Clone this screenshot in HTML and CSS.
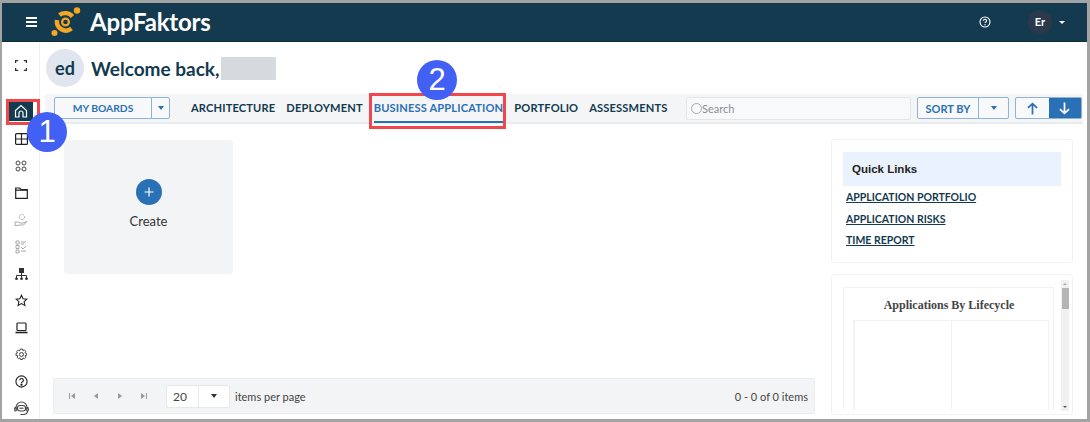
FILE: index.html
```html
<!DOCTYPE html>
<html lang="en">
<head>
<meta charset="utf-8">
<title>AppFaktors</title>
<link rel="stylesheet" href="styles.css">
</head>
<body>
<div class="frame">
  <header class="topbar">
    <div class="burger"><span></span><span></span><span></span></div>
    <svg class="logo" width="30" height="30" viewBox="0 0 30 30">
      <circle cx="14.500" cy="15" r="3.400" fill="none" stroke="#f5a623" stroke-width="2.200"/>
      <path d="M21.500 9.500a9.500 9.500 0 0 0-13-1.500" fill="none" stroke="#f5a623" stroke-width="4.400"/>
      <path d="M6 13a9 9 0 0 0 14.500 8.500" fill="none" stroke="#f5a623" stroke-width="4.400"/>
      <circle cx="26" cy="3.500" r="3.200" fill="#f5a623"/>
      <circle cx="3.500" cy="26" r="3" fill="#f5a623"/>
    </svg>
    <div class="brand">AppFaktors</div>
    <svg class="help" width="12" height="12" viewBox="0 0 12 12">
      <circle cx="6" cy="6" r="5" fill="none" stroke="#fff" stroke-width="1.100"/>
      <path d="M4.400 4.700a1.600 1.500 0 1 1 2.400 1.300c-.6.400-.8.600-.8 1.100" fill="none" stroke="#fff" stroke-width="1.100"/>
      <circle cx="6" cy="8.700" r=".7" fill="#fff"/>
    </svg>
    <div class="user">Er</div>
    <div class="user-caret"></div>
  </header>
  <div class="main">
    <nav class="sidebar">
      <div class="side-item first"><svg width="12" height="11" viewBox="0 0 12 11" fill="none" stroke="#333" stroke-width="1.200"><path d="M.6 3V.6h2.600M8.800.6h2.600V3M11.400 8v2.400H8.800M3.200 10.400H.6V8"/></svg></div>
      <div class="side-item home"><svg width="14" height="14" viewBox="0 0 14 14" fill="none" stroke="#fff" stroke-width="1.200"><path d="M1.500 6.500 7 1.500l5.500 5V13H9V9a2 2 0 0 0-4 0v4H1.500z"/></svg></div>
      <div class="side-item"><svg width="13" height="12" viewBox="0 0 13 12" fill="none" stroke="#222" stroke-width="1.200"><rect x=".6" y=".6" width="11.800" height="10.800" rx="1"/><path d="M.6 6h11.800M6.500.6v10.800"/></svg></div>
      <div class="side-item"><svg width="12" height="12" viewBox="0 0 12 12" fill="none" stroke="#444" stroke-width="1"><circle cx="3" cy="3" r="2"/><circle cx="9" cy="3" r="2"/><circle cx="3" cy="9" r="2"/><circle cx="9" cy="9" r="2"/></svg></div>
      <div class="side-item"><svg width="13" height="12" viewBox="0 0 13 12" fill="none" stroke="#222" stroke-width="1.200"><path d="M.7 1h4l1.300 1.500h6.300v8.800H.7z"/><path d="M.7 3.200h11.600"/></svg></div>
      <div class="side-item"><svg width="14" height="14" viewBox="0 0 14 14" fill="none" stroke="#aaa" stroke-width="1"><circle cx="8" cy="4" r="2.600" stroke-dasharray="1.500 .6"/><path d="M1 9h3l2 1h3l4-1.500-3.500 3.500H5l-1 .5H1z"/></svg></div>
      <div class="side-item"><svg width="13" height="14" viewBox="0 0 13 14" fill="none" stroke="#aaa" stroke-width="1"><path d="M1 1h3v3H1zM1 5.500h3v3H1zM1 10h3v3H1zM6 2h5M6 4h3M6 7l2 2 3-3M6 11h5"/></svg></div>
      <div class="side-item"><svg width="13" height="12" viewBox="0 0 13 12" fill="none" stroke="#333" stroke-width="1"><rect x="4.500" y="0" width="4" height="4.500" fill="#333"/><path d="M6.500 4.500v3M1.500 10V7.500h10V10M6.500 7.500V10"/><circle cx="1.500" cy="10.700" r="1" fill="#333"/><circle cx="6.500" cy="10.700" r="1" fill="#333"/><circle cx="11.500" cy="10.700" r="1" fill="#333"/></svg></div>
      <div class="side-item"><svg width="13" height="13" viewBox="0 0 13 13" fill="none" stroke="#222" stroke-width="1.100"><path d="m6.500 1.200 1.600 3.500 3.800.4-2.800 2.600.8 3.800-3.400-1.900-3.400 1.900.8-3.800L1.100 5.100l3.800-.4z"/></svg></div>
      <div class="side-item"><svg width="13" height="12" viewBox="0 0 13 12" fill="none" stroke="#222" stroke-width="1.200"><rect x="2" y="1" width="9" height="7.500" rx=".8"/><path d="M.5 10.500h12" stroke-width="1.600"/></svg></div>
      <div class="side-item"><svg width="13" height="13" viewBox="0 0 13 13" fill="none" stroke="#444" stroke-width="1"><circle cx="6.500" cy="6.500" r="2"/><path d="M5.500 1h2l.4 1.600 1.500-.7 1.400 1.400-.8 1.500 1.500.5v2l-1.500.5.8 1.500-1.400 1.400-1.500-.8-.4 1.600h-2l-.5-1.600-1.500.8-1.400-1.400.8-1.500L1 7.500v-2l1.500-.5-.8-1.500 1.400-1.400 1.500.7z"/></svg></div>
      <div class="side-item"><svg width="13" height="13" viewBox="0 0 13 13" fill="none" stroke="#222" stroke-width="1.100"><circle cx="6.500" cy="6.500" r="5.600"/><path d="M4.800 5.200a1.800 1.700 0 1 1 2.700 1.500c-.7.400-1 .7-1 1.200"/><circle cx="6.500" cy="9.700" r=".6" fill="#222"/></svg></div>
      <div class="side-item"><svg width="15" height="15" viewBox="0 0 15 15" fill="none" stroke="#444" stroke-width="1.100"><path d="M2 8V6.500a5.500 5.500 0 0 1 11 0V8"/><rect x="3.500" y="4.500" width="8" height="5.500" rx="2.500"/><path d="M5.500 7.200h4"/><rect x=".7" y="6.500" width="1.600" height="3.500" rx=".8"/><rect x="12.700" y="6.500" width="1.600" height="3.500" rx=".8"/><path d="M13.500 10c0 2.500-2 3.500-4.500 3.500H6.500"/></svg></div>
    </nav>
    <div class="content">
      <div class="welcome">
        <div class="avatar">ed</div>
        <h1 class="greeting">Welcome back,</h1>
        <div class="redacted"></div>
      </div>
      <div class="toolbar">
        <div class="split boards">
          <div class="split-label">MY BOARDS</div>
          <div class="split-caret"><i class="caret"></i></div>
        </div>
        <div class="tabs">
          <a class="tab">ARCHITECTURE</a>
          <a class="tab">DEPLOYMENT</a>
          <a class="tab active">BUSINESS APPLICATION</a>
          <a class="tab">PORTFOLIO</a>
          <a class="tab">ASSESSMENTS</a>
        </div>
        <div class="search">
          <span class="search-ring"></span><span class="search-text">Search</span>
        </div>
        <div class="split sort">
          <div class="split-label">SORT BY</div>
          <div class="split-caret"><i class="caret"></i></div>
        </div>
        <div class="order">
          <div class="order-btn"><svg width="13" height="13" viewBox="0 0 12 12" fill="none" stroke="#2a70b5" stroke-width="1.600"><path d="M6 11.500V1.500M1.800 5.500 6 1.500l4.200 4"/></svg></div>
          <div class="order-btn on"><svg width="13" height="13" viewBox="0 0 12 12" fill="none" stroke="#fff" stroke-width="1.600"><path d="M6 .5v10M1.800 6.500 6 10.500l4.200-4"/></svg></div>
        </div>
      </div>
      <div class="body">
        <div class="left">
          <div class="boards-area">
            <div class="create-card">
              <div class="plus"><svg width="10" height="10" viewBox="0 0 10 10" stroke="#fff" stroke-width="1.200"><path d="M5 .5v9M.5 5h9"/></svg></div>
              <div class="create-label">Create</div>
            </div>
          </div>
          <div class="pager">
            <div class="pager-nav">
              <svg width="8" height="8" viewBox="0 0 8 8" fill="#999"><path d="M1 1h1v6H1zM7 1v6L3 4z"/></svg>
              <svg width="8" height="8" viewBox="0 0 8 8" fill="#999"><path d="M6 1v6L2 4z"/></svg>
              <svg width="8" height="8" viewBox="0 0 8 8" fill="#999"><path d="M2 1v6l4-3z"/></svg>
              <svg width="8" height="8" viewBox="0 0 8 8" fill="#999"><path d="M6 1h1v6H6zM1 1v6l4-3z"/></svg>
            </div>
            <div class="page-size">
              <div class="page-value">20</div>
              <div class="page-caret"><i class="caret dark"></i></div>
            </div>
            <div class="per-page">items per page</div>
            <div class="pager-info">0 - 0 of 0 items</div>
          </div>
        </div>
        <aside class="right">
          <section class="card links">
            <div class="links-head">Quick Links</div>
            <a class="link">APPLICATION PORTFOLIO</a>
            <a class="link">APPLICATION RISKS</a>
            <a class="link">TIME REPORT</a>
          </section>
          <section class="card chart-card">
            <div class="chart">
              <div class="chart-title">Applications By Lifecycle</div>
              <div class="plot"><div class="plot-col"></div><div class="plot-col"></div></div>
            </div>
            <div class="scroll">
              <i class="scroll-up"></i>
              <div class="thumb"></div>
              <i class="scroll-down"></i>
            </div>
          </section>
        </aside>
      </div>
    </div>
  </div>
  <div class="mark-box home-box"></div>
  <div class="mark-box tab-box"></div>
  <div class="step step-one">1</div>
  <div class="step step-two">2</div>
</div>
</body>
</html>
```
FILE: styles.css
```css
* { box-sizing: border-box; }
html, body { margin: 0; padding: 0; background: #fff; }
body { font-family: Lato, "Open Sans", sans-serif; color: #333; }
.frame {
  position: relative;
  width: 1090px;
  height: 422px;
  border: solid #a3a3a3;
  border-width: 3px 3px 3px 2px;
  display: flex;
  flex-direction: column;
  overflow: hidden;
  background: #fff;
}
.topbar {
  height: 39px;
  flex: none;
  background: #133a4f;
  border-bottom: 1px solid #0d2c3c;
  display: flex;
  align-items: center;
  padding-left: 24px;
  color: #fff;
}
.burger { width: 11px; display: flex; flex-direction: column; gap: 2px; }
.burger span { display: block; height: 2px; background: #fff; }
.logo { margin-left: 14px; }
.brand { margin-left: 9px; font-size: 24px; font-weight: 700; line-height: 30px; letter-spacing: -.2px; }
.help { margin-left: auto; }
.user {
  margin-left: 37px;
  width: 24px;
  height: 24px;
  border-radius: 50%;
  background: #2a3a4a;
  font-size: 11px;
  font-weight: 700;
  line-height: 24px;
  text-align: center;
}
.user-caret {
  margin: 0 22px 0 7px;
  border: 3px solid transparent;
  border-top: 3px solid #fff;
  border-bottom: 0;
  width: 0;
  height: 0;
}
.main { flex: 1; display: flex; min-height: 0; }
.sidebar {
  width: 38px;
  flex: none;
  border-right: 1px solid #eff0f2;
  display: flex;
  flex-direction: column;
  align-items: center;
  padding: 10px 0 0 1px;
}
.side-item { height: 27px; width: 24px; flex: none; display: flex; align-items: center; justify-content: center; }
.side-item.first { margin-bottom: 18px; }
.side-item.home { background: #133a4f; height: 21px; margin: 3px 0 4px; width: 24px; }
.content { flex: 1; min-width: 0; display: flex; flex-direction: column; }
.welcome { height: 52px; flex: none; display: flex; align-items: center; padding-left: 6px; }
.avatar {
  width: 38px;
  height: 38px;
  border-radius: 50%;
  background: #e1e5ef;
  color: #133a4f;
  font-size: 18px;
  font-weight: 700;
  line-height: 38px;
  text-align: center;
}
.greeting { margin: 0 0 0 7px; font-size: 19px; font-weight: 700; color: #133a4f; }
.redacted { width: 55px; height: 23px; margin-left: 2px; background: #d5dade; }
.toolbar {
  height: 30px;
  flex: none;
  margin: 0 4px 0 5px;
  padding: 3px 1px 0 9px;
  background: #f4f5f7;
  border-bottom: 2px solid #e9ebee;
  display: flex;
  align-items: flex-start;
}
.split {
  height: 22px;
  display: flex;
  border: 1px solid #8fb3d6;
  border-radius: 2px;
  background: #f8f9fb;
  color: #2a70b5;
  font-size: 11px;
  font-weight: 700;
}
.split-label { display: flex; align-items: center; justify-content: center; border-right: 1px solid #8fb3d6; }
.split-caret { display: flex; align-items: center; justify-content: center; }
.boards { width: 116px; font-size: 10.300px; }
.boards .split-label { width: 97px; }
.boards .split-caret { flex: 1; }
.sort { width: 92px; margin-left: 6px; }
.sort .split-label { width: 61px; }
.sort .split-caret { flex: 1; }
.caret { width: 0; height: 0; border: 3.500px solid transparent; border-top: 4px solid #2a70b5; border-bottom: 0; display: block; }
.caret.dark { border-top-color: #333; }
.tabs { display: flex; gap: 11px; margin-left: 21px; width: 495px; }
.tab {
  font-size: 11.100px;
  letter-spacing: .15px;
  font-weight: 700;
  color: #133a4f;
  height: 26px;
  line-height: 22px;
  white-space: nowrap;
}
.tab.active { color: #2a70b5; border-bottom: 2px solid #2a70b5; }
.search {
  width: 225px;
  height: 23px;
  background: #f8f9fb;
  border: 1px solid #e4e6ea;
  border-radius: 2px;
  display: flex;
  align-items: center;
  padding-left: 4px;
  font-size: 11px;
  color: #8a8f96;
}
.search-ring { width: 11px; height: 11px; border: 1px solid #aaa; border-radius: 50%; }
.order { display: flex; margin-left: 6px; width: 67px; height: 22px; border: 1px solid #8fb3d6; border-radius: 2px; background: #f8f9fb; }
.order-btn { flex: 1; display: flex; align-items: center; justify-content: center; }
.order-btn.on { background: #2a70b5; }
.body { flex: 1; display: flex; min-height: 0; }
.left { width: 775px; flex: none; display: flex; flex-direction: column; padding: 16px 0 5px 13px; margin-right: 16px; }
.boards-area { flex: 1; padding-left: 11px; }
.create-card {
  width: 169px;
  height: 134px;
  background: #f3f4f6;
  border-radius: 3px;
  display: flex;
  flex-direction: column;
  align-items: center;
  padding-top: 39px;
}
.plus { width: 26px; height: 26px; border-radius: 50%; background: #2a70b5; display: flex; align-items: center; justify-content: center; }
.create-label { margin-top: 7px; font-size: 13px; line-height: 18px; color: #333; }
.pager {
  height: 36px;
  flex: none;
  background: #f3f4f6;
  border: 1px solid #eceef1;
  display: flex;
  align-items: center;
  padding: 0 6px 0 14px;
  font-size: 11px;
  color: #444;
}
.pager-nav { display: flex; gap: 16px; width: 98px; }
.page-size { width: 64px; height: 23px; background: #fff; border: 1px solid #e6e8eb; border-radius: 2px; display: flex; }
.page-value { width: 32px; border-right: 1px solid #e6e8eb; line-height: 21px; font-size: 12px; padding-left: 6px; }
.page-caret { flex: 1; display: flex; align-items: center; justify-content: center; }
.per-page { margin-left: 5px; }
.pager-info { margin-left: auto; }
.right { width: 242px; flex: none; display: flex; flex-direction: column; gap: 11px; padding-top: 15px; }
.card { border: 1px solid #f1f2f4; border-radius: 3px; background: #fff; }
.links { height: 124px; padding: 12px 11px 0; display: flex; flex-direction: column; align-items: flex-start; }
.links-head {
  align-self: stretch;
  height: 34px;
  margin-bottom: 1px;
  background: #eaf2fd;
  padding-left: 9px;
  font-family: "Liberation Sans", sans-serif;
  font-size: 11.500px;
  font-weight: 700;
  line-height: 34px;
  color: #222;
}
.link {
  margin-left: 3px;
  font-size: 10.500px;
  font-weight: 700;
  line-height: 21.500px;
  color: #133a4f;
  text-decoration: underline;
}
.chart-card { height: 141px; display: flex; padding: 5px 3px 4px 11px; overflow: hidden; }
.chart { width: 211px; height: 123px; margin-top: 7px; border: 1px solid #f1f2f6; border-bottom: 0; flex: none; padding: 0 4px 0 9px; overflow: hidden; }
.chart-title {
  height: 32px;
  padding-right: 4px;
  font-family: "Liberation Serif", serif;
  font-size: 12px;
  font-weight: 700;
  line-height: 34px;
  text-align: center;
  color: #444;
}
.plot { height: 120px; border: 1px solid #f1f2f6; border-left-width: 2px; display: flex; }
.plot-col { flex: 1; }
.plot-col + .plot-col { border-left: 1px solid #f1f2f6; }
.scroll { width: 9px; margin-left: 7px; height: 131px; background: #f0f0f0; display: flex; flex-direction: column; align-items: center; padding: 3px 0; }
.thumb { width: 7px; height: 21px; background: #b5b5b5; margin-top: 3px; }
.scroll-up, .scroll-down { width: 0; height: 0; border: 2px solid transparent; display: block; }
.scroll-up { border-bottom: 2px solid #aaa; border-top: 0; }
.scroll-down { border-top: 2px solid #555; border-bottom: 0; margin-top: auto; }
.mark-box { position: absolute; border: 3px solid #f0474c; }
.home-box { left: 4px; top: 96px; width: 34px; height: 26px; }
.tab-box { left: 367px; top: 90px; width: 137px; height: 36px; }
.step {
  position: absolute;
  width: 40px;
  height: 40px;
  border-radius: 50%;
  background: #4360f5;
  color: #fff;
  font-family: "Liberation Sans", sans-serif;
  font-size: 31px;
  line-height: 40px;
  text-align: center;
}
.step-one { left: 25px; top: 109px; }
.step-two { left: 415px; top: 57px; }
```
